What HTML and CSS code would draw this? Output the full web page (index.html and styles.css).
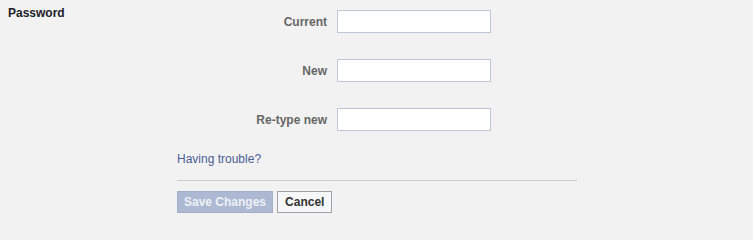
FILE: index.html
```html
<!DOCTYPE html>
<html>
<head>
<meta charset="utf-8">
<link rel="stylesheet" href="styles.css">
</head>
<body>
<div class="section">
  <div class="section-title">Password</div>
  <form class="form">
    <div class="fields">
      <label class="field-label" for="cur">Current</label>
      <input class="field-input" id="cur" type="password">
      <label class="field-label" for="new">New</label>
      <input class="field-input" id="new" type="password">
      <label class="field-label" for="re">Re-type new</label>
      <input class="field-input" id="re" type="password">
    </div>
    <a class="trouble" href="#">Having trouble?</a>
    <div class="divider"></div>
    <div class="actions">
      <button type="button" class="btn btn-save">Save Changes</button>
      <button type="button" class="btn btn-cancel">Cancel</button>
    </div>
  </form>
</div>
</body>
</html>
```

FILE: styles.css
```css
html, body {
  margin: 0;
  padding: 0;
  background: #f2f2f2;
}
body {
  font-family: "Liberation Sans", Arial, sans-serif;
  font-size: 12px;
  line-height: 15px;
}
.section {
  display: flex;
  align-items: flex-start;
}
.section-title {
  width: 177px;
  padding-left: 8px;
  padding-top: 6px;
  box-sizing: border-box;
  font-weight: bold;
  color: #1d2129;
}
.form {
  width: 400px;
  padding-top: 10px;
  margin: 0;
  display: flex;
  flex-direction: column;
}
.fields {
  display: grid;
  grid-template-columns: 150px 154px;
  column-gap: 10px;
  row-gap: 26px;
  align-items: center;
}
.field-label {
  text-align: right;
  font-weight: bold;
  color: #666;
  padding-top: 1px;
}
.field-input {
  width: 154px;
  height: 23px;
  box-sizing: border-box;
  margin: 0;
  padding: 2px 3px;
  border: 1px solid #bdc7d8;
  background: #fff;
  font: inherit;
}
.trouble {
  margin-top: 21px;
  align-self: flex-start;
  color: #4b5d96;
  text-decoration: none;
}
.divider {
  margin-top: 13px;
  height: 1px;
  background: #ccc;
}
.actions {
  margin-top: 10px;
  display: flex;
  gap: 4px;
}
.btn {
  height: 22px;
  box-sizing: border-box;
  margin: 0;
  padding: 0 6px;
  font-family: "Liberation Sans", Arial, sans-serif;
  font-size: 12px;
  font-weight: bold;
  line-height: 18px;
  border-radius: 0;
}
.btn-save {
  background: #adb9d3;
  border: 1px solid #a3b0cb;
  color: #eef1f6;
}
.btn-cancel {
  padding: 0 7px;
  background: #f6f7f9;
  border: 1px solid #a0a0a0;
  color: #333;
}
```
